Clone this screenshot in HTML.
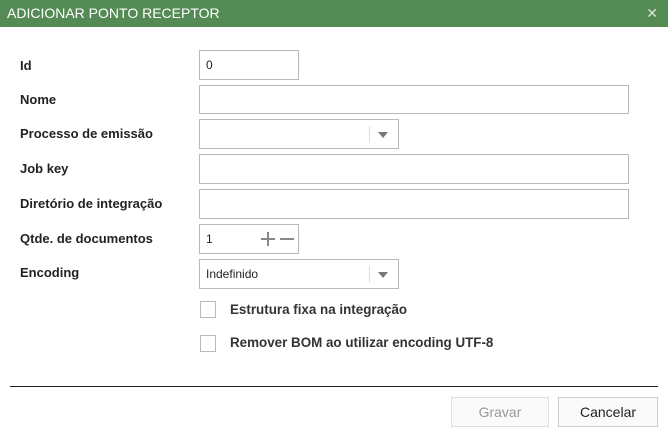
<!DOCTYPE html>
<html><head><style>
body{margin:0;width:668px;height:433px;background:#fff;font-family:"Liberation Sans",sans-serif;position:relative;overflow:hidden}
.t{position:absolute;left:0;top:0;width:668px;height:27px;background:#548a54;color:#fff;font-size:14px;line-height:27px}
.t span{position:absolute;left:7px}
.t b{position:absolute;right:10px;font-weight:normal;font-size:14px;color:#d8e6d8}
.l{position:absolute;left:20px;font-size:13px;font-weight:bold;color:#222}
.i{position:absolute;left:199px;border:1px solid #b8b8b8;box-sizing:border-box;font-size:12px;color:#222;padding-left:6px}
.dd:after{content:"";position:absolute;right:10px;top:12px;border-left:5px solid transparent;border-right:5px solid transparent;border-top:6px solid #777}
.dd:before{content:"";position:absolute;right:28px;top:6px;height:17px;border-left:1px solid #ddd}
.cb{position:absolute;left:200px;width:16px;height:17px;border:1px solid #bbb;box-sizing:border-box}
.cl{position:absolute;left:230px;font-size:13.4px;font-weight:bold;color:#333}
.btn{position:absolute;top:397px;height:30px;border:1px solid #ccc;box-sizing:border-box;font-size:14px;text-align:center;line-height:28px;background:#fafafa}
</style></head><body>
<div class="t"><span>ADICIONAR PONTO RECEPTOR</span><b>✕</b></div>
<div class="l" style="top:58px">Id</div>
<div class="l" style="top:92px">Nome</div>
<div class="l" style="top:126px">Processo de emissão</div>
<div class="l" style="top:161px">Job key</div>
<div class="l" style="top:196px">Diretório de integração</div>
<div class="l" style="top:231px">Qtde. de documentos</div>
<div class="l" style="top:265px">Encoding</div>
<div class="i" style="top:50px;width:100px;height:30px;line-height:28px">0</div>
<div class="i" style="top:85px;width:430px;height:29px"></div>
<div class="i dd" style="top:119px;width:200px;height:30px"></div>
<div class="i" style="top:154px;width:430px;height:30px"></div>
<div class="i" style="top:189px;width:430px;height:30px"></div>
<div class="i" style="top:224px;width:100px;height:30px;line-height:28px">1<span style="position:absolute;left:61px;top:13px;width:14px;height:2px;background:#888"></span><span style="position:absolute;left:67px;top:7px;width:2px;height:14px;background:#888"></span><span style="position:absolute;left:80px;top:13px;width:14px;height:2px;background:#888"></span></div>
<div class="i dd" style="top:259px;width:200px;height:30px;line-height:28px">Indefinido</div>
<div class="cb" style="top:301px"></div><div class="cl" style="top:302px">Estrutura fixa na integração</div>
<div class="cb" style="top:335px"></div><div class="cl" style="top:335px">Remover BOM ao utilizar encoding UTF-8</div>
<div style="position:absolute;left:10px;top:386px;width:648px;height:1px;background:#222"></div>
<div class="btn" style="left:451px;width:98px;color:#999;border-color:#ddd">Gravar</div>
<div class="btn" style="left:558px;width:100px;color:#222">Cancelar</div>
</body></html>
